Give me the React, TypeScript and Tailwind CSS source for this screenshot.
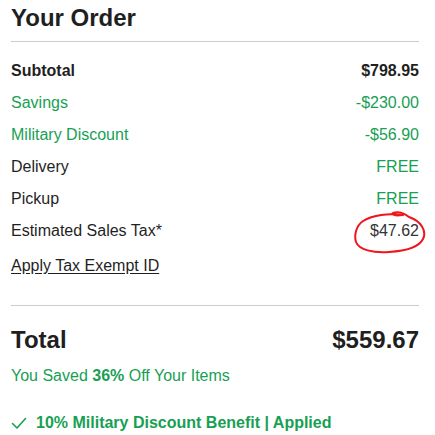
import React from 'react';

const rows = [
  { label: 'Savings', value: '-$230.00', green: true },
  { label: 'Military Discount', value: '-$56.90', green: true },
  { label: 'Delivery', value: 'FREE', greenValue: true },
  { label: 'Pickup', value: 'FREE', greenValue: true },
];

export default function App() {
  return (
    <div
      className="w-[435px] h-[435px] bg-white text-[#1f1f1f] pl-[11px] pr-[16px] overflow-hidden"
      style={{ fontFamily: '"Liberation Sans", Arial, sans-serif' }}
    >
      <h1 className="text-[24px] font-bold leading-none pt-[6px] h-[41px]">Your Order</h1>
      <div className="border-t border-[#cccccc]" />

      <div className="pt-[13px]">
        <div className="flex justify-between items-center h-[32px] text-[16px] leading-[22px] font-bold">
          <span>Subtotal</span>
          <span>$798.95</span>
        </div>
        {rows.map((r) => (
          <div
            key={r.label}
            className={`flex justify-between items-center h-[32px] text-[16px] leading-[22px] ${r.green ? 'text-[#17a053]' : ''}`}
          >
            <span>{r.label}</span>
            <span className={r.greenValue ? 'text-[#17a053]' : ''}>{r.value}</span>
          </div>
        ))}
        <div className="flex justify-between items-center h-[32px] text-[16px] leading-[22px]">
          <span>Estimated Sales Tax*</span>
          <span className="relative text-[#333333]">
            $47.62
            <svg
              className="absolute left-[-17px] top-[-11px] pointer-events-none"
              width="74"
              height="46"
              viewBox="0 0 74 46"
              fill="none"
            >
              <path
                d="M48 6 C36 4 20 6 10 12 C3 17 1 26 3 33 C6 41 20 44 36 43 C52 42 66 38 70 30 C74 22 68 12 56 8 C52 5 46 2 40 4 C38 6 42 7 50 6"
                stroke="#f0141c"
                strokeWidth="2"
                strokeLinecap="round"
                strokeLinejoin="round"
              />
            </svg>
          </span>
        </div>
        <div className="h-[38px] flex items-center text-[16px] leading-[22px]">
          <span className="underline underline-offset-2">Apply Tax Exempt ID</span>
        </div>
      </div>

      <div className="mt-[20px] border-t border-[#cccccc]" />

      <div className="flex justify-between items-center pt-[22px] text-[24px] font-bold leading-none">
        <span>Total</span>
        <span>$559.67</span>
      </div>
      <div className="mt-[13px] text-[16px] leading-[22px] text-[#17a053]">
        You Saved <span className="font-bold">36%</span> Off Your Items
      </div>
      <div className="mt-[25px] flex items-center gap-[9px] text-[16px] leading-[22px] font-bold text-[#17a053]">
        <svg width="16" height="14" viewBox="0 0 16 14" fill="none">
          <path d="M1.5 7.5 L6 12 L14.5 2.5" stroke="#17a053" strokeWidth="1.6" strokeLinecap="round" strokeLinejoin="round" />
        </svg>
        <span>10% Military Discount Benefit | Applied</span>
      </div>
    </div>
  );
}
